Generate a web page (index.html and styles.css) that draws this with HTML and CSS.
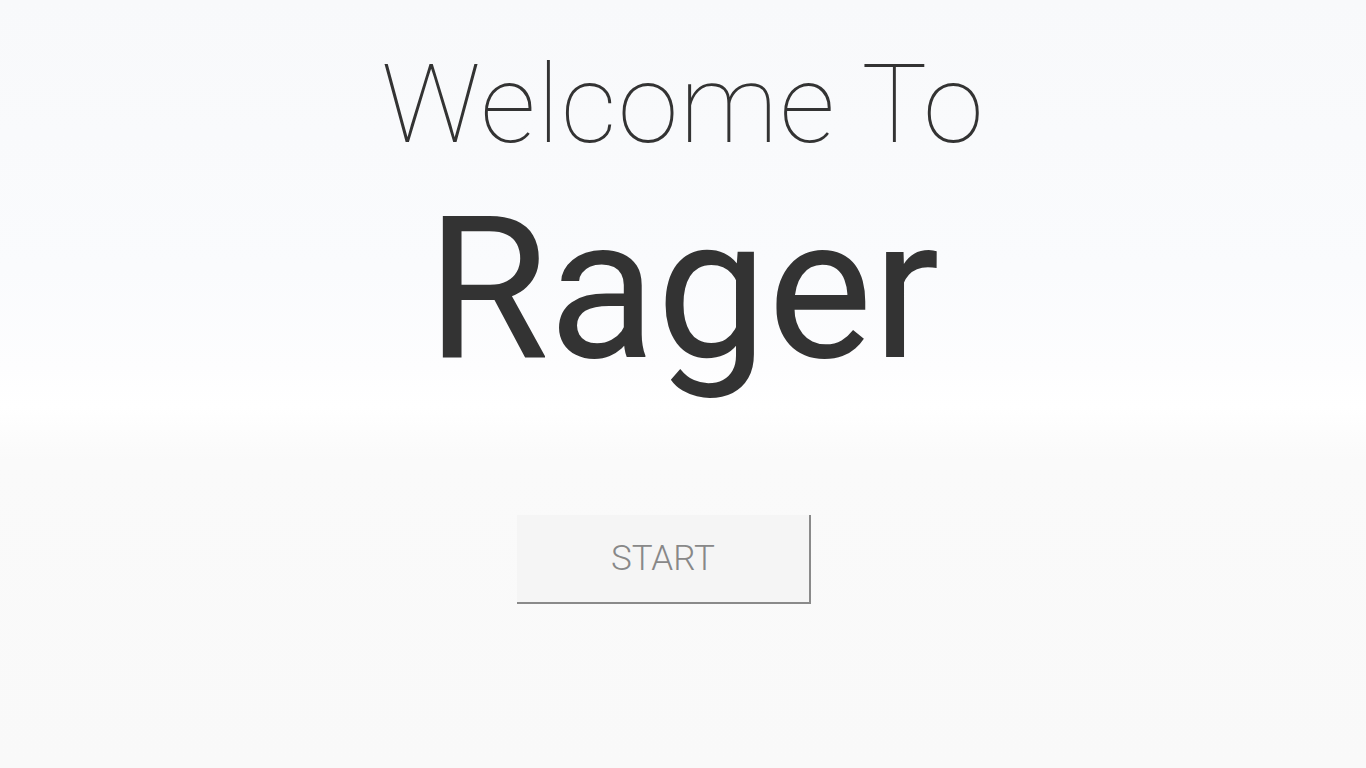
FILE: index.html
```html
<!DOCTYPE html>
<html>
<head>
<meta charset="utf-8">
<title>Rager</title>
<link rel="stylesheet" href="styles.css">
</head>
<body>
<main class="welcome">
  <h2 class="welcome-sub">Welcome To</h2>
  <h1 class="welcome-title">Rager</h1>
  <button class="start-btn">START</button>
</main>
</body>
</html>
```

FILE: styles.css
```css
html, body {
  margin: 0;
  padding: 0;
  height: 100%;
}
body {
  font-family: Roboto, "Liberation Sans", sans-serif;
  color: #333;
  background: linear-gradient(to bottom, #f8f9fb 0%, #fafbfd 35%, #fdfdfe 48%, #ffffff 53%, #fafafa 60%, #f9f9f9 100%);
  overflow: hidden;
}
.welcome {
  display: flex;
  flex-direction: column;
  align-items: center;
  padding-top: 50px;
}
.welcome-sub {
  margin: 0;
  font-size: 110px;
  font-weight: 100;
  line-height: 1;
  letter-spacing: 1.2px;
  color: #333;
}
.welcome-title {
  margin: 30px 0 0;
  font-size: 198px;
  font-weight: 400;
  line-height: 1;
  color: #333;
}
.start-btn {
  margin: 127px 38px 0 0;
  width: 294px;
  height: 89px;
  background: #f5f5f5;
  border: none;
  border-right: 2px solid #8a8a8a;
  border-bottom: 2px solid #8a8a8a;
  font-family: Roboto, "Liberation Sans", sans-serif;
  font-weight: 300;
  font-size: 35px;
  color: #888;
  padding: 0;
  cursor: pointer;
}
```
